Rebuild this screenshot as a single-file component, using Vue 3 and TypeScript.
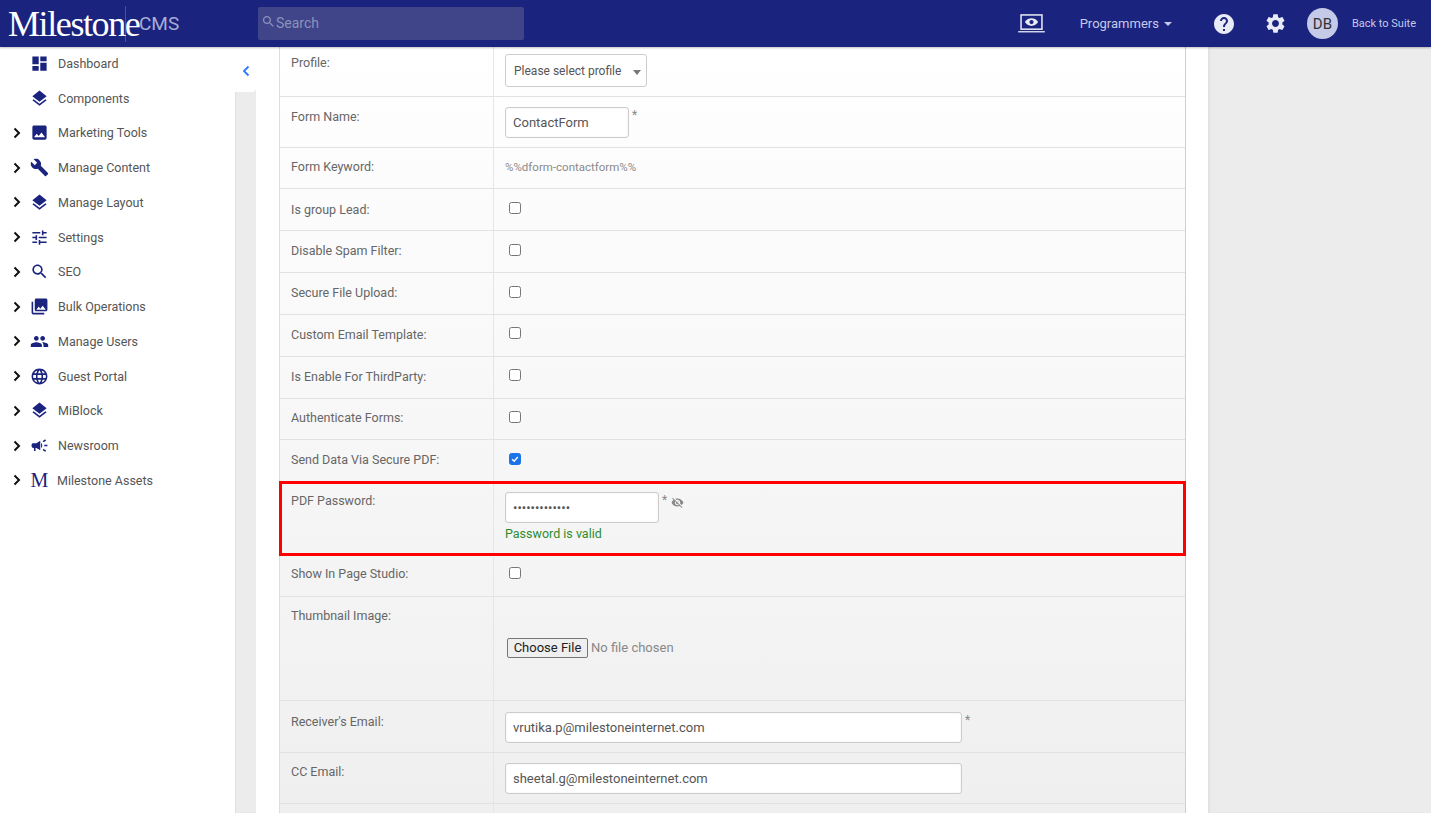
<template>
  <div class="page">
    <header class="topbar">
      <div class="brand">
        <span class="logo">Milestone</span>
        <span class="cms">CMS</span>
      </div>
      <div class="search">
        <svg class="search-icon" viewBox="0 0 24 24"><path :d="icons.search" /></svg>
        <span>Search</span>
      </div>
      <div class="top-right">
        <svg class="laptop" viewBox="0 0 28 20">
          <rect x="3" y="1" width="22" height="15" fill="none" stroke="#e8eaf6" stroke-width="1.6" />
          <path d="M0 18h28v1.4H0z" fill="#e8eaf6" />
          <path d="M7 8.5c2-3 4.4-4 7-4s5 1 7 4c-2 3-4.4 4-7 4s-5-1-7-4z" fill="#e8eaf6" />
          <circle cx="14" cy="8.5" r="2.2" fill="#1a237e" />
        </svg>
        <span class="role">Programmers</span>
        <span class="caret"></span>
        <svg class="help" viewBox="0 0 24 24"><path :d="icons.help" /></svg>
        <svg class="gear" viewBox="0 0 24 24"><path :d="icons.settings" /></svg>
        <span class="avatar">DB</span>
        <span class="suite">Back to Suite</span>
      </div>
    </header>

    <div class="main">
      <nav class="sidebar">
        <div v-for="item in menu" :key="item.label" class="menu-item">
          <svg v-if="item.arrow" class="chevron" viewBox="0 0 10 12">
            <path d="M2.5 1.5 7 6l-4.5 4.5" fill="none" stroke="#111" stroke-width="2" />
          </svg>
          <span v-else class="chevron"></span>
          <span v-if="item.letter" class="m-icon">M</span>
          <svg v-else class="menu-icon" viewBox="0 0 24 24"><path :d="item.icon" /></svg>
          <span class="menu-label" :class="{ tight: item.letter }">{{ item.label }}</span>
        </div>
      </nav>

      <div class="gutter">
        <div class="toggle">
          <svg viewBox="0 0 10 12"><path d="M7.5 1.5 3 6l4.5 4.5" fill="none" stroke="#2979ff" stroke-width="1.8" /></svg>
        </div>
      </div>

      <section class="panel">
        <div class="form-table">
          <div class="row profile-row">
            <div class="label">Profile:</div>
            <div class="value">
              <div class="select">
                <span>Please select profile</span>
                <i class="select-caret"></i>
              </div>
            </div>
          </div>
          <div class="row name-row">
            <div class="label">Form Name:</div>
            <div class="value">
              <input class="field short" value="ContactForm" readonly />
              <span class="star">*</span>
            </div>
          </div>
          <div class="row keyword-row">
            <div class="label">Form Keyword:</div>
            <div class="value keyword">%%dform-contactform%%</div>
          </div>

          <div v-for="c in checks" :key="c.label" class="row" :style="{ height: c.height + 'px' }">
            <div class="label" :style="{ paddingTop: c.top + 'px' }">{{ c.label }}</div>
            <div class="value" :style="{ paddingTop: c.box + 'px' }">
              <span class="check" :class="{ on: c.on }">
                <svg v-if="c.on" viewBox="0 0 12 12"><path d="M2.6 6.2 5 8.6l4.4-5" fill="none" stroke="#fff" stroke-width="1.7" /></svg>
              </span>
            </div>
          </div>

          <div class="row password-row">
            <div class="label">PDF Password:</div>
            <div class="value">
              <div class="pass-line">
                <input class="field pass" type="password" value="Milestone@123" readonly />
                <span class="star">*</span>
                <svg class="eye" viewBox="0 0 24 24"><path :d="icons.eyeOff" /></svg>
              </div>
              <div class="valid">Password is valid</div>
            </div>
            <div class="highlight"></div>
          </div>

          <div class="row studio-row">
            <div class="label">Show In Page Studio:</div>
            <div class="value"><span class="check"></span></div>
          </div>

          <div class="row thumb-row">
            <div class="label">Thumbnail Image:</div>
            <div class="value">
              <span class="file-btn">Choose File</span>
              <span class="file-none">No file chosen</span>
            </div>
          </div>

          <div class="row mail-row">
            <div class="label">Receiver's Email:</div>
            <div class="value">
              <input class="field wide" value="vrutika.p@milestoneinternet.com" readonly />
              <span class="star">*</span>
            </div>
          </div>
          <div class="row mail-row cc">
            <div class="label">CC Email:</div>
            <div class="value">
              <input class="field wide" value="sheetal.g@milestoneinternet.com" readonly />
            </div>
          </div>
          <div class="row last-row">
            <div class="label"></div>
            <div class="value"></div>
          </div>
        </div>
      </section>

      <aside class="rest"></aside>
    </div>
  </div>
</template>

<script setup lang="ts">
const icons = {
  dashboard: "M3 13h8V3H3v10zm0 8h8v-6H3v6zm10 0h8V11h-8v10zm0-18v6h8V3h-8z",
  layers: "M11.99 18.54l-7.37-5.73L3 14.07l9 7 9-7-1.63-1.27-7.38 5.74zM12 16l7.36-5.73L21 9l-9-7-9 7 1.63 1.27L12 16z",
  image: "M21 19V5c0-1.1-.9-2-2-2H5c-1.1 0-2 .9-2 2v14c0 1.1.9 2 2 2h14c1.1 0 2-.9 2-2zM8.5 13.5l2.5 3.01L14.5 12l4.5 6H5l3.5-4.5z",
  build: "M22.7 19l-9.1-9.1c.9-2.3.4-5-1.5-6.9-2-2-5-2.4-7.4-1.3L9 6 6 9 1.6 4.7C.4 7.1.9 10.1 2.9 12.1c1.9 1.9 4.6 2.4 6.9 1.5l9.1 9.1c.4.4 1 .4 1.4 0l2.3-2.3c.5-.4.5-1.1.1-1.4z",
  tune: "M3 17v2h6v-2H3zM3 5v2h10V5H3zm10 16v-2h8v-2h-8v-2h-2v6h2zM7 9v2H3v2h4v2h2V9H7zm14 4v-2H11v2h10zm-6-4h2V7h4V5h-4V3h-2v6z",
  search: "M15.5 14h-.79l-.28-.27C15.41 12.59 16 11.11 16 9.5 16 5.91 13.09 3 9.5 3S3 5.91 3 9.5 5.91 16 9.5 16c1.61 0 3.09-.59 4.23-1.57l.27.28v.79l5 4.99L20.49 19l-4.99-5zm-6 0C7.01 14 5 11.99 5 9.5S7.01 5 9.5 5 14 7.01 14 9.5 11.99 14 9.5 14z",
  photos: "M22 16V4c0-1.1-.9-2-2-2H8c-1.1 0-2 .9-2 2v12c0 1.1.9 2 2 2h12c1.1 0 2-.9 2-2zm-11-4l2.03 2.71L16 11l4 5H8l3-4zM2 6v14c0 1.1.9 2 2 2h14v-2H4V6H2z",
  people: "M16 11c1.66 0 2.99-1.34 2.99-3S17.66 5 16 5c-1.66 0-3 1.34-3 3s1.34 3 3 3zm-8 0c1.66 0 2.99-1.34 2.99-3S9.66 5 8 5C6.34 5 5 6.34 5 8s1.34 3 3 3zm0 2c-2.33 0-7 1.17-7 3.5V19h14v-2.5c0-2.33-4.67-3.5-7-3.5zm8 0c-.29 0-.62.02-.97.05 1.16.84 1.97 1.97 1.97 3.45V19h6v-2.5c0-2.33-4.67-3.5-7-3.5z",
  globe: "M11.99 2C6.47 2 2 6.48 2 12s4.47 10 9.99 10C17.52 22 22 17.52 22 12S17.52 2 11.99 2zm6.93 6h-2.95c-.32-1.25-.78-2.45-1.38-3.56 1.84.63 3.37 1.91 4.33 3.56zM12 4.04c.83 1.2 1.48 2.53 1.91 3.96h-3.82c.43-1.43 1.08-2.76 1.91-3.96zM4.26 14C4.1 13.36 4 12.69 4 12s.1-1.36.26-2h3.38c-.08.66-.14 1.32-.14 2 0 .68.06 1.34.14 2H4.26zm.82 2h2.95c.32 1.25.78 2.45 1.38 3.56-1.84-.63-3.37-1.9-4.33-3.56zm2.95-8H5.08c.96-1.66 2.49-2.93 4.33-3.56C8.81 5.55 8.35 6.75 8.03 8zM12 19.96c-.83-1.2-1.48-2.53-1.91-3.96h3.82c-.43 1.43-1.08 2.76-1.91 3.96zM14.34 14H9.66c-.09-.66-.16-1.32-.16-2 0-.68.07-1.35.16-2h4.68c.09.65.16 1.32.16 2 0 .68-.07 1.34-.16 2zm.25 5.56c.6-1.11 1.06-2.31 1.38-3.56h2.95c-.96 1.65-2.49 2.93-4.33 3.56zM16.36 14c.08-.66.14-1.32.14-2 0-.68-.06-1.34-.14-2h3.38c.16.64.26 1.31.26 2s-.1 1.36-.26 2h-3.38z",
  campaign: "M18 11v2h4v-2h-4zm-2 6.61c.96.71 2.21 1.65 3.2 2.39.4-.53.8-1.07 1.2-1.6-.99-.74-2.24-1.68-3.2-2.4-.4.54-.8 1.08-1.2 1.61zM20.4 5.6c-.4-.53-.8-1.07-1.2-1.6-.99.74-2.24 1.68-3.2 2.4.4.53.8 1.07 1.2 1.6.96-.72 2.21-1.65 3.2-2.4zM4 9c-1.1 0-2 .9-2 2v2c0 1.1.9 2 2 2h1v4h2v-4h1l5 3V6L8 9H4zm11.5 3c0-1.33-.58-2.53-1.5-3.35v6.69c.92-.81 1.5-2.01 1.5-3.34z",
  help: "M12 2C6.48 2 2 6.48 2 12s4.48 10 10 10 10-4.48 10-10S17.52 2 12 2zm1 17h-2v-2h2v2zm2.07-7.75l-.9.92C13.45 12.9 13 13.5 13 15h-2v-.5c0-1.1.45-2.1 1.17-2.83l1.24-1.26c.37-.36.59-.86.59-1.41 0-1.1-.9-2-2-2s-2 .9-2 2H8c0-2.21 1.79-4 4-4s4 1.79 4 4c0 .88-.36 1.68-.93 2.25z",
  settings: "M19.14 12.94c.04-.3.06-.61.06-.94 0-.32-.02-.64-.07-.94l2.03-1.58c.18-.14.23-.41.12-.61l-1.92-3.32c-.12-.22-.37-.29-.59-.22l-2.39.96c-.5-.38-1.03-.7-1.62-.94l-.36-2.54c-.04-.24-.24-.41-.48-.41h-3.84c-.24 0-.43.17-.47.41l-.36 2.54c-.59.24-1.13.57-1.62.94l-2.39-.96c-.22-.08-.47 0-.59.22L2.74 8.87c-.12.21-.08.47.12.61l2.03 1.58c-.05.3-.09.63-.09.94s.02.64.07.94l-2.03 1.58c-.18.14-.23.41-.12.61l1.92 3.32c.12.22.37.29.59.22l2.39-.96c.5.38 1.03.7 1.62.94l.36 2.54c.05.24.24.41.48.41h3.84c.24 0 .44-.17.47-.41l.36-2.54c.59-.24 1.13-.56 1.62-.94l2.39.96c.22.08.47 0 .59-.22l1.92-3.32c.12-.22.07-.47-.12-.61l-2.01-1.58zM12 15.6c-1.98 0-3.6-1.62-3.6-3.6s1.62-3.6 3.6-3.6 3.6 1.62 3.6 3.6-1.62 3.6-3.6 3.6z",
  eyeOff: "M12 7c2.76 0 5 2.24 5 5 0 .65-.13 1.26-.36 1.83l2.92 2.92c1.51-1.26 2.7-2.89 3.43-4.75-1.73-4.39-6-7.5-11-7.5-1.4 0-2.74.25-3.98.7l2.16 2.16C10.74 7.13 11.35 7 12 7zM2 4.27l2.28 2.28.46.46C3.08 8.3 1.78 10.02 1 12c1.73 4.39 6 7.5 11 7.5 1.55 0 3.03-.3 4.38-.84l.42.42L19.73 22 21 20.73 3.27 3 2 4.27zM7.53 9.8l1.55 1.55c-.05.21-.08.43-.08.65 0 1.66 1.34 3 3 3 .22 0 .44-.03.65-.08l1.55 1.55c-.67.33-1.41.53-2.2.53-2.76 0-5-2.24-5-5 0-.79.2-1.53.53-2.2zm4.31-.78l3.15 3.15.02-.16c0-1.66-1.34-3-3-3l-.17.01z",
};

interface MenuItem {
  label: string;
  icon?: string;
  arrow: boolean;
  letter?: boolean;
}

const menu: MenuItem[] = [
  { label: "Dashboard", icon: icons.dashboard, arrow: false },
  { label: "Components", icon: icons.layers, arrow: false },
  { label: "Marketing Tools", icon: icons.image, arrow: true },
  { label: "Manage Content", icon: icons.build, arrow: true },
  { label: "Manage Layout", icon: icons.layers, arrow: true },
  { label: "Settings", icon: icons.tune, arrow: true },
  { label: "SEO", icon: icons.search, arrow: true },
  { label: "Bulk Operations", icon: icons.photos, arrow: true },
  { label: "Manage Users", icon: icons.people, arrow: true },
  { label: "Guest Portal", icon: icons.globe, arrow: true },
  { label: "MiBlock", icon: icons.layers, arrow: true },
  { label: "Newsroom", icon: icons.campaign, arrow: true },
  { label: "Milestone Assets", arrow: true, letter: true },
];

// row height, label offset and checkbox offset as measured per row
const checks = [
  { label: "Is group Lead:", height: 42, top: 13, box: 13 },
  { label: "Disable Spam Filter:", height: 42, top: 12, box: 13 },
  { label: "Secure File Upload:", height: 42, top: 12, box: 13 },
  { label: "Custom Email Template:", height: 42, top: 12, box: 12 },
  { label: "Is Enable For ThirdParty:", height: 42, top: 12, box: 12 },
  { label: "Authenticate Forms:", height: 41, top: 11, box: 12 },
  { label: "Send Data Via Secure PDF:", height: 42, top: 12, box: 13, on: true },
];
</script>

<style>
html,
body {
  margin: 0;
  overflow: hidden;
}
</style>

<style scoped>
.page {
  height: 100vh;
  display: flex;
  flex-direction: column;
  font-family: Roboto, "Liberation Sans", sans-serif;
  overflow: hidden;
}

.topbar {
  height: 47px;
  flex: none;
  background: #1a237e;
  display: flex;
  align-items: center;
  box-shadow: 0 1px 2px rgba(0, 0, 0, 0.25);
  position: relative;
  z-index: 2;
}

.brand {
  width: 258px;
  display: flex;
  align-items: center;
  flex: none;
}

.logo {
  width: 126px;
  font-family: "Liberation Serif", serif;
  font-size: 36px;
  line-height: 36px;
  color: #fff;
  padding-left: 8px;
  box-sizing: border-box;
  border-right: 1px solid #4a5199;
  white-space: nowrap;
  letter-spacing: -1.4px;
  transform-origin: left center;
  margin-right: 13px;
}

.cms {
  font-size: 19px;
  color: #a9acd3;
}

.search {
  width: 266px;
  height: 33px;
  margin-top: -1px;
  background: #3f4588;
  border-radius: 2px;
  display: flex;
  align-items: center;
  color: #8d91bd;
  font-size: 14px;
  padding-left: 3px;
  box-sizing: border-box;
}

.search-icon {
  width: 15px;
  height: 15px;
  fill: #8d91bd;
  margin-right: 0;
  margin-top: -3px;
}

.top-right {
  margin-left: auto;
  display: flex;
  align-items: center;
  padding-right: 15px;
}

.laptop {
  width: 27px;
  height: 19px;
  margin-right: 35px;
}

.role {
  font-size: 13px;
  color: #c5cae9;
}

.caret {
  width: 0;
  height: 0;
  border-left: 4px solid transparent;
  border-right: 4px solid transparent;
  border-top: 4px solid #c5cae9;
  margin: 0 40px 0 5px;
}

.help {
  width: 24px;
  height: 24px;
  fill: #e8eaf6;
  margin-right: 28px;
}

.gear {
  width: 23px;
  height: 23px;
  fill: #e8eaf6;
  margin-right: 20px;
}

.avatar {
  width: 31px;
  height: 31px;
  border-radius: 50%;
  background: #c5cae9;
  color: #333;
  font-size: 15px;
  display: flex;
  align-items: center;
  justify-content: center;
  margin-right: 14px;
}

.suite {
  font-size: 11px;
  color: #c5cae9;
}

.main {
  flex: 1;
  min-height: 0;
  display: flex;
}

.sidebar {
  width: 235px;
  flex: none;
  background: #fff;
  box-sizing: border-box;
  margin-top: -1px;
}

.menu-item {
  height: 34.75px;
  display: flex;
  align-items: center;
  color: #555;
  font-size: 12.5px;
}

.chevron {
  width: 10px;
  height: 12px;
  margin-left: 12px;
  flex: none;
}

.menu-icon {
  width: 19px;
  height: 19px;
  fill: #1a237e;
  margin-left: 8px;
  flex: none;
}

.m-icon {
  width: 19px;
  margin-left: 8px;
  font-family: "Liberation Serif", serif;
  font-size: 20px;
  color: #1a237e;
  text-align: center;
  flex: none;
}

.menu-label {
  margin-left: 9px;
}

.menu-label.tight {
  margin-left: 8px;
}

.gutter {
  width: 21px;
  flex: none;
  background: #ececec;
  box-shadow: inset 1px 0 1px #e0e0e0;
}

.toggle {
  height: 45px;
  background: #fff;
  border-radius: 0 0 4px 0;
  display: flex;
  align-items: center;
  justify-content: center;
}

.toggle svg {
  width: 10px;
  height: 12px;
  margin-top: 2px;
}

.panel {
  width: 952px;
  flex: none;
  background: #fff;
  padding: 0 22px 0 23px;
  box-sizing: border-box;
}

.form-table {
  height: 100%;
  border-left: 1px solid #ddd;
  border-right: 1px solid #cfcfcf;
  background: linear-gradient(#fff, #efefef);
  font-size: 12.5px;
  color: #666;
}

.row {
  display: flex;
  box-sizing: border-box;
  border-bottom: 1px solid #e2e2e2;
  position: relative;
}

.label {
  width: 214px;
  flex: none;
  box-sizing: border-box;
  padding-left: 11px;
  line-height: 16px;
  border-right: 1px solid #e6e6e6;
}

.value {
  flex: 1;
  box-sizing: border-box;
  padding-left: 11px;
  line-height: 16px;
}

.profile-row {
  height: 50px;
}

.profile-row .label {
  padding-top: 8px;
}

.profile-row .value {
  padding-top: 7px;
}

.select {
  width: 142px;
  height: 33px;
  box-sizing: border-box;
  border: 1px solid #ccc;
  border-radius: 3px;
  background: #fff;
  display: flex;
  align-items: center;
  padding-left: 8px;
  font-size: 12px;
  color: #555;
  position: relative;
}

.select-caret {
  position: absolute;
  right: 5px;
  top: 15px;
  border-left: 4px solid transparent;
  border-right: 4px solid transparent;
  border-top: 5px solid #777;
}

.name-row {
  height: 51px;
}

.name-row .label {
  padding-top: 12px;
}

.name-row .value {
  padding-top: 10px;
}

.field {
  display: inline-block;
  vertical-align: top;
  height: 31px;
  box-sizing: border-box;
  border: 1px solid #ccc;
  border-radius: 3px;
  background: #fff;
  padding: 0 7px;
  font-family: inherit;
  font-size: 13px;
  color: #555;
  outline: none;
  box-shadow: inset 0 0 2px rgba(0, 0, 0, 0.08);
}

.short {
  width: 124px;
}

.pass {
  width: 154px;
}

.wide {
  width: 457px;
}

.star {
  display: inline-block;
  vertical-align: top;
  margin-left: 3px;
  color: #888;
  font-size: 12px;
}

.keyword-row {
  height: 41px;
}

.keyword-row .label {
  padding-top: 11px;
}

.keyword {
  padding-top: 11px;
  font-size: 11.5px;
  color: #8a8a8a;
}

.check {
  display: block;
  width: 12px;
  height: 12px;
  margin-left: 4px;
  box-sizing: border-box;
  border: 1px solid #767676;
  border-radius: 2.5px;
  background: #fff;
}

.check.on {
  background: #1a73e8;
  border-color: #1a73e8;
}

.check svg {
  display: block;
  width: 10px;
  height: 10px;
}

.password-row {
  height: 75px;
  margin-top: -1px;
  border-bottom: 0;
}

.password-row .label {
  padding-top: 12px;
}

.password-row .value {
  padding-top: 11px;
}

.pass-line {
  display: flex;
  align-items: flex-start;
  height: 31px;
}

.eye {
  width: 13px;
  height: 13px;
  fill: #888;
  margin: 4px 0 0 4px;
}

.valid {
  margin-top: 3px;
  font-size: 12.5px;
  color: #2e8b2e;
}

.highlight {
  position: absolute;
  left: -1px;
  right: -1px;
  top: 0;
  bottom: 0;
  border: 3px solid #f00;
  pointer-events: none;
}

.studio-row {
  height: 40px;
  margin-top: 1px;
}

.studio-row .label {
  padding-top: 9px;
}

.studio-row .value {
  padding-top: 10px;
}

.thumb-row {
  height: 104px;
}

.thumb-row .label {
  padding-top: 11px;
}

.thumb-row .value {
  padding-top: 41px;
  padding-left: 13px;
  display: flex;
  align-items: flex-start;
}

.file-btn {
  height: 20px;
  width: 81px;
  box-sizing: border-box;
  border: 1px solid #767676;
  border-radius: 2px;
  background: #efefef;
  color: #222;
  font-size: 13px;
  line-height: 18px;
  text-align: center;
}

.file-none {
  margin-left: 3px;
  font-size: 13px;
  line-height: 20px;
  color: #888;
}

.mail-row {
  height: 52px;
}

.mail-row .label {
  padding-top: 13px;
}

.mail-row .value {
  padding-top: 11px;
}

.mail-row.cc {
  height: 51px;
}

.mail-row.cc .label {
  padding-top: 11px;
}

.mail-row.cc .value {
  padding-top: 10px;
}

.last-row {
  height: 20px;
  border-bottom: 0;
}

.rest {
  flex: 1;
  background: #ececec;
  box-shadow: inset 2px 0 1px #e2e2e2;
}
</style>
